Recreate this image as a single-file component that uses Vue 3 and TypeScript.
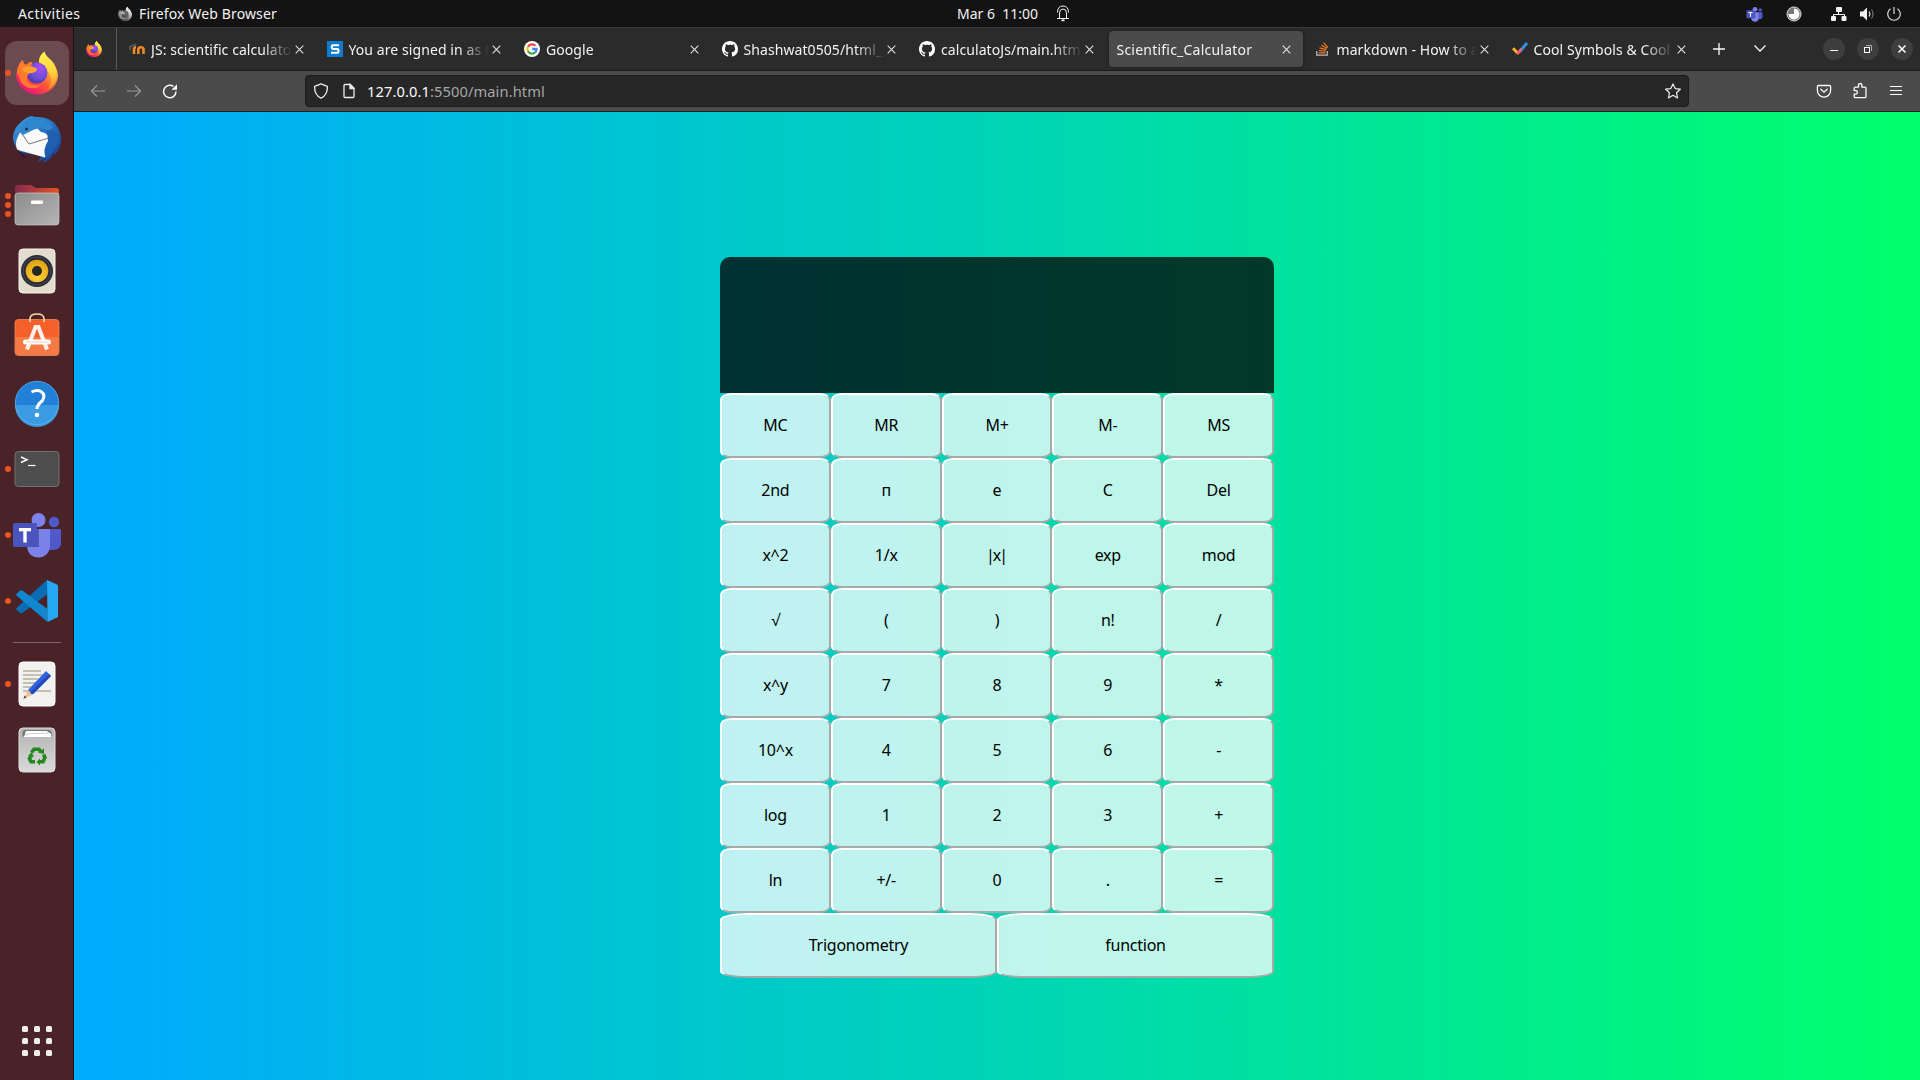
<script setup lang="ts">
interface Tab {
  title: string
  icon: string
  active?: boolean
}

interface DockItem {
  name: string
  dots: number
  active?: boolean
}

const tabs: Tab[] = [
  { title: 'JS: scientific calculator', icon: 'moodle' },
  { title: 'You are signed in as to', icon: 's' },
  { title: 'Google', icon: 'google' },
  { title: 'Shashwat0505/html_p', icon: 'github' },
  { title: 'calculatoJs/main.html', icon: 'github' },
  { title: 'Scientific_Calculator', icon: '', active: true },
  { title: 'markdown - How to ad', icon: 'stack' },
  { title: 'Cool Symbols & Cool F', icon: 'check' },
]

const apps: DockItem[] = [
  { name: 'firefox', dots: 1, active: true },
  { name: 'thunderbird', dots: 0 },
  { name: 'files', dots: 3 },
  { name: 'rhythmbox', dots: 0 },
  { name: 'software', dots: 0 },
  { name: 'help', dots: 0 },
  { name: 'terminal', dots: 1 },
  { name: 'teams', dots: 1 },
  { name: 'vscode', dots: 1 },
  { name: 'separator', dots: 0 },
  { name: 'editor', dots: 1 },
  { name: 'trash', dots: 0 },
]

const keys: string[][] = [
  ['MC', 'MR', 'M+', 'M-', 'MS'],
  ['2nd', 'п', 'e', 'C', 'Del'],
  ['x^2', '1/x', '|x|', 'exp', 'mod'],
  ['√', '(', ')', 'n!', '/'],
  ['x^y', '7', '8', '9', '*'],
  ['10^x', '4', '5', '6', '-'],
  ['log', '1', '2', '3', '+'],
  ['ln', '+/-', '0', '.', '='],
  ['Trigonometry', 'function'],
]
</script>

<template>
  <div class="desktop">
    <svg class="defs" width="0" height="0">
      <defs>
        <linearGradient id="ffBody" x1="0.85" y1="0.1" x2="0.25" y2="0.95">
          <stop offset="0" stop-color="#fff44f" />
          <stop offset="0.35" stop-color="#ffa436" />
          <stop offset="0.62" stop-color="#ff5634" />
          <stop offset="1" stop-color="#e8117f" />
        </linearGradient>
        <linearGradient id="ffFlame" x1="0.5" y1="0" x2="0.5" y2="1">
          <stop offset="0" stop-color="#fff350" />
          <stop offset="0.5" stop-color="#ffd53e" />
          <stop offset="1" stop-color="#ff8a2c" />
        </linearGradient>
        <radialGradient id="ffGlobe" cx="0.65" cy="0.25" r="0.8">
          <stop offset="0" stop-color="#a84bf5" />
          <stop offset="0.6" stop-color="#6e4fd8" />
          <stop offset="1" stop-color="#4f37a8" />
        </radialGradient>
        <linearGradient id="tbBlue" x1="0" y1="0" x2="0.8" y2="1">
          <stop offset="0" stop-color="#3fa3e0" />
          <stop offset="0.5" stop-color="#2570c0" />
          <stop offset="1" stop-color="#1b3f96" />
        </linearGradient>
        <linearGradient id="filesBack" x1="0" x2="1">
          <stop offset="0" stop-color="#82294f" />
          <stop offset="1" stop-color="#e9541f" />
        </linearGradient>
        <linearGradient id="filesFront" x1="0" y1="0" x2="1" y2="1">
          <stop offset="0" stop-color="#8c8c8c" />
          <stop offset="1" stop-color="#b5b5b5" />
        </linearGradient>
        <radialGradient id="speaker" cx="0.5" cy="0.75" r="0.75">
          <stop offset="0" stop-color="#ffd33c" />
          <stop offset="1" stop-color="#dca00d" />
        </radialGradient>
        <linearGradient id="trashBody" x1="0" y1="0" x2="0" y2="1">
          <stop offset="0" stop-color="#b3b3b3" />
          <stop offset="1" stop-color="#dadada" />
        </linearGradient>
        <symbol id="firefox" viewBox="0 0 48 48">
          <path d="M4 22C5 15 8 12 10 11C10 14 11 15 13 16C15 14 17 13 19 13L19 17L27 14C26 8 29 5 31.500 2.500C32 8 39 10 42 17C44.500 21 45 25 45 27C44 38 35 45.500 24 45.500S3 36 3 25Z" fill="url(#ffBody)" />
          <path d="M31.500 2.500C32 8 39 10 42 17C46 28 42 37 34 41C40 34 39 27 35 23C33 18 25 18 26 11C27 6 29 5 31.500 2.500Z" fill="url(#ffFlame)" />
          <circle cx="24" cy="24" r="10.500" fill="url(#ffGlobe)" />
          <path d="M4 23C5 17 8 13 10 11C10 14 11 15 13 16C15 14 17 13 19 13L18 17L24 20C24 22 22 23 19 24C16 24 14 26 14 29C14 35 22 38 28 35C25 41 13 41 8 33Z" fill="#ff7a2c" />
          <path d="M10 19C14 17 20 17 24 20C24 22 22 23 19 24L14 24C11 23 9 22 10 19Z" fill="#ffa22c" />
        </symbol>
        <symbol id="teams" viewBox="0 0 48 48">
          <circle cx="41" cy="12" r="5.200" fill="#5059c9" />
          <path d="M36 19H48V33Q48 39 41 40H36Z" fill="#5059c9" />
          <circle cx="25.500" cy="10" r="7" fill="#7b83eb" />
          <path d="M15 19H37V36Q36 47 25.500 47.500Q15 47 14 37Z" fill="#7b83eb" />
          <path d="M14 19H26V37H14Z" fill="#424a9e" opacity=".75" />
          <rect x="0" y="13" width="24" height="24" rx="1.500" fill="#4b53bc" />
          <path d="M6 18H18V21.200H13.700V32.500H10.300V21.200H6Z" fill="#fff" />
        </symbol>
      </defs>
    </svg>

    <header class="topbar">
      <span class="activities">Activities</span>
      <svg class="app-icon" width="16" height="16"><use href="#firefox" /></svg>
      <span class="app-name">Firefox Web Browser</span>
      <span class="clock">Mar 6&nbsp; 11:00</span>
      <svg class="bell" width="14" height="17" viewBox="0 0 14 17" fill="none" stroke="#eee">
        <path d="M1 13.500H13M3.500 13V8Q3.500 4 7 4T10.500 8V13M1.500 7.500Q1.500 1 7 1T12.500 7.500" />
        <path d="M5.500 15.300H8.500" stroke-width="1.800" />
      </svg>
      <div class="status">
        <svg class="st-teams" width="17" height="16"><use href="#teams" /></svg>
        <svg class="st-clock" width="16" height="16" viewBox="0 0 16 16">
          <circle cx="8" cy="8" r="7" fill="#777" stroke="#ddd" />
          <path d="M8 8V2.500A5.500 5.500 0 1 1 2.500 8Z" fill="#fff" />
        </svg>
        <svg class="st-net" width="16" height="16" viewBox="0 0 16 16" fill="#f2f2f2">
          <rect x="5" y="1" width="6" height="5" rx="1" />
          <rect x="0" y="10" width="5" height="5" rx="1" />
          <rect x="10.500" y="10" width="5" height="5" rx="1" />
          <path d="M7.500 6V8.500M2.500 10V8.500H13.500V10" fill="none" stroke="#f2f2f2" />
        </svg>
        <svg class="st-vol" width="16" height="16" viewBox="0 0 16 16" fill="none">
          <path d="M1 5.500H4L8 1.500V14.500L4 10.500H1Z" fill="#f2f2f2" />
          <path d="M10 5.500Q11.800 8 10 10.500" stroke="#ddd" stroke-width="1.200" />
          <path d="M12.500 3.500Q15.600 8 12.500 12.500" stroke="#888" />
        </svg>
        <svg class="st-power" width="16" height="16" viewBox="0 0 16 16" fill="none" stroke="#ddd" stroke-width="1.200">
          <path d="M4.500 2.700A6.300 6.300 0 1 0 11.500 2.700M8 1V8" />
        </svg>
      </div>
    </header>

    <div class="workspace">
      <aside class="dock">
        <template v-for="app in apps" :key="app.name">
          <div v-if="app.name === 'separator'" class="dock-sep"></div>
          <div v-else class="dock-item" :class="{ active: app.active }">
            <div class="dots"><i v-for="n in app.dots" :key="n"></i></div>
            <svg v-if="app.name === 'firefox'" width="48" height="48"><use href="#firefox" /></svg>
            <svg v-else-if="app.name === 'thunderbird'" width="48" height="48" viewBox="0 -1 48 48">
              <path d="M7 7Q13 1 19 0L22 1Q36 0 43 9Q49 17 48 27Q46 34 42 39L41 36Q39 44 29 47L33 42L25 46L28 40L7 36Q0 29 0 21Q1 12 7 7Z" fill="url(#tbBlue)" />
              <path d="M5 34L14 42Q8 41 5 34Z" fill="#2a1250" />
              <path d="M9 14Q4 20 3 27Q3 33 5 34L32 41.500L37 22Q33 16 28 16L23 11Q16 14 9 14Z" fill="#fafafa" />
              <path d="M7 15L16 28L36 22" fill="none" stroke="#777" />
              <path d="M7 16Q9 5 19 1Q33 1 40 11L36 15Q28 10 20 14Q16 16 10 19Z" fill="#2d86ce" />
              <path d="M34 14Q44 14 46 23Q42 36 33 42Q29 34 35 25Z" fill="#205eae" />
              <circle cx="13.500" cy="13" r="1.500" fill="#26333f" />
            </svg>
            <svg v-else-if="app.name === 'files'" width="48" height="48" viewBox="0 0 48 48">
              <path d="M2 42V7Q2 4 5 4H18L23 7H43Q46 7 46 10V40Z" fill="url(#filesBack)" />
              <rect x="2" y="12" width="44" height="32" rx="3" fill="url(#filesFront)" stroke="#c9c9c9" stroke-width=".7" />
              <rect x="18" y="19.500" width="12" height="3.500" rx="1" fill="#fff" />
            </svg>
            <svg v-else-if="app.name === 'rhythmbox'" width="48" height="48" viewBox="0 0 48 48">
              <rect x="6" y="2" width="36" height="44" rx="4" fill="#e3ddd0" stroke="#f5f2ea" />
              <circle cx="24" cy="24" r="16" fill="#2a2b36" />
              <circle cx="24" cy="24" r="14" fill="none" stroke="#484a5c" />
              <circle cx="24" cy="24" r="11.300" fill="url(#speaker)" />
              <circle cx="24" cy="24" r="5" fill="#262626" />
            </svg>
            <svg v-else-if="app.name === 'software'" width="48" height="48" viewBox="0 0 48 48">
              <rect x="2" y="6.500" width="44" height="36" rx="3.500" fill="#f4602a" stroke="#ef8b61" stroke-width=".8" />
              <path d="M2.500 24H45.500V39Q45.500 42 42.500 42H5.500Q2.500 42 2.500 39Z" fill="#f67a45" />
              <path d="M17 9V6Q17 1 24 1T31 6V9" fill="none" stroke="#f4d9a5" stroke-width="1.600" />
              <path d="M14 36.500L22.500 14H25.500L34 36.500" fill="none" stroke="#fff1e9" stroke-width="4" />
              <rect x="10" y="26.500" width="28" height="5" rx="2.500" fill="#fff" />
              <path d="M13 29H35" stroke="#f5cdb9" />
            </svg>
            <svg v-else-if="app.name === 'help'" width="48" height="48" viewBox="0 0 48 48">
              <circle cx="24" cy="24" r="22" fill="#2180d8" />
              <path d="M2 26H46A22 22 0 0 1 2 26Z" fill="#3b9be2" />
              <circle cx="24" cy="24" r="21.700" fill="none" stroke="#62b2ec" stroke-width=".7" />
              <path d="M18.500 13Q24 10.500 28 12.500Q33 16 29.500 21.500Q24 26 24 30" fill="none" stroke="#fff" stroke-width="3" />
              <circle cx="24" cy="36" r="2.300" fill="#fff" />
            </svg>
            <svg v-else-if="app.name === 'terminal'" width="48" height="48" viewBox="0 0 48 48">
              <rect x="2" y="6.500" width="44" height="35" rx="3.500" fill="#4d4d4d" stroke="#727272" />
              <path d="M8 12L14 14.800L8 17.500" fill="none" stroke="#fff" stroke-width="1.500" />
              <path d="M15 20.500H22.500" stroke="#fff" stroke-width="1.200" />
            </svg>
            <svg v-else-if="app.name === 'teams'" width="48" height="48" viewBox="0 0 48 48"><use href="#teams" y="-1" /></svg>
            <svg v-else-if="app.name === 'vscode'" width="48" height="48" viewBox="0 0 48 48">
              <path d="M3.500 31L30 6.500L34.500 3V17L10 35.500Q8 37 6.500 35.500L3.500 32.500Q2.500 31.700 3.500 31Z" fill="#0a6cb4" />
              <path d="M3.500 17L6.500 14Q8 12.500 10 14L34.500 32V45L31 42L3.500 18.500Q2.500 17.500 3.500 17Z" fill="#1187d0" />
              <path d="M34 3L44 7.500Q45 8 45 9V39Q45 40 44 40.500L34.500 45Z" fill="#25a7f1" />
            </svg>
            <svg v-else-if="app.name === 'editor'" width="48" height="48" viewBox="0 0 48 48">
              <rect x="6" y="2" width="36" height="44" rx="4" fill="#f1f1f0" stroke="#fff" />
              <path d="M10 11H28M10 15H31M10 19H25M10 23H24M10 27H18M10 31H38" stroke="#c5bfb2" stroke-width="2" />
              <path d="M15 30L19 35L11 38.500Z" fill="#f4bd8a" />
              <path d="M11.500 35.500L13.500 37.500L10.500 38.700Z" fill="#444" />
              <path d="M15 30L33 11L38 16L20 34.500Z" fill="#2f62e0" />
              <path d="M19 34.500L38 16L36 14L17 32.500Z" fill="#2448b4" />
            </svg>
            <svg v-else-if="app.name === 'trash'" width="48" height="48" viewBox="0 0 48 48">
              <rect x="6" y="2" width="36" height="44" rx="4" fill="url(#trashBody)" stroke="#dedede" />
              <path d="M9.500 10.500V7Q9.500 4 13 4H35Q38.500 4 38.500 7V10.500Z" fill="#757575" />
              <path d="M11 11L13 5H34L38 8V11Z" fill="#fff" />
              <path d="M13 10V8L36 7" fill="none" stroke="#bbb" stroke-width=".7" />
              <g fill="none" stroke="#23891f" stroke-width="3.600">
                <path d="M18.500 26.500L21 23.200H26L28 26" />
                <path d="M30.500 28.500L32 31.500L30 35.800H26" />
                <path d="M22 35.800H18L16.500 32.500L18 30" />
              </g>
              <path d="M25 26.500L31 28L31 22.500ZM27 32.500L23.500 36L27 39.500ZM15 30L18.500 26L21 31Z" fill="#23891f" />
            </svg>
          </div>
        </template>
        <div class="apps-grid"><i v-for="n in 9" :key="n"></i></div>
      </aside>

      <main class="window">
        <div class="tabbar">
          <div class="pinned"><svg width="18" height="18"><use href="#firefox" /></svg></div>
          <div class="tabs">
            <div v-for="tab in tabs" :key="tab.title" class="tab" :class="{ selected: tab.active }">
              <div class="tab-inner">
                <svg v-if="tab.icon === 'moodle'" class="fav" width="16" height="16" viewBox="0 0 16 16" fill="none">
                  <path d="M5 13V8.500Q5 6.300 7 6.300M9.300 13V8.500Q9.300 6.300 11.800 6.300Q14.500 6.300 14.500 8.500V13" stroke="#f08a24" stroke-width="2.600" />
                  <path d="M0 5L6 2.500L8 4L3 6Z" fill="#555" />
                  <path d="M1 5V9" stroke="#777" />
                </svg>
                <svg v-else-if="tab.icon === 's'" class="fav" width="16" height="16" viewBox="0 0 16 16">
                  <rect width="16" height="16" fill="#0f7bcf" />
                  <path d="M12 4.300H6Q4.700 4.300 4.700 6T6 7.900H10.300Q11.500 7.900 11.500 9.800T10.300 11.700H4" fill="none" stroke="#fff" stroke-width="2" />
                </svg>
                <svg v-else-if="tab.icon === 'google'" class="fav" width="16" height="16" viewBox="0 0 16 16" fill="none">
                  <circle cx="8" cy="8" r="8" fill="#fff" />
                  <g stroke-width="2.300">
                    <path d="M11.400 4.800A4.600 4.600 0 0 0 4 5.800" stroke="#ea4335" />
                    <path d="M4 5.800A4.600 4.600 0 0 0 4 10.300" stroke="#fbbc05" />
                    <path d="M4 10.300A4.600 4.600 0 0 0 11.200 11.300" stroke="#34a853" />
                    <path d="M11.200 11.300A4.600 4.600 0 0 0 12.600 8H8.200" stroke="#4285f4" />
                  </g>
                </svg>
                <svg v-else-if="tab.icon === 'github'" class="fav" width="16" height="16" viewBox="0 0 16 16" fill="#fff">
                  <path d="M8 0C3.580 0 0 3.580 0 8c0 3.540 2.290 6.530 5.470 7.590.4.070.55-.17.55-.38 0-.19-.01-.82-.01-1.490-2.010.37-2.530-.49-2.690-.94-.09-.23-.48-.94-.82-1.130-.28-.15-.68-.52-.01-.53.63-.01 1.080.58 1.230.82.72 1.210 1.870.87 2.330.66.07-.52.28-.87.51-1.070-1.780-.2-3.640-.89-3.640-3.950 0-.87.31-1.590.82-2.150-.08-.2-.36-1.020.08-2.120 0 0 .67-.21 2.200.82.64-.18 1.320-.27 2-.27s1.360.09 2 .27c1.530-1.040 2.200-.82 2.200-.82.44 1.100.16 1.920.08 2.120.51.56.82 1.270.82 2.150 0 3.070-1.870 3.750-3.650 3.950.29.25.54.73.54 1.480 0 1.070-.01 1.930-.01 2.200 0 .21.15.46.55.38A8 8 0 0 0 16 8c0-4.420-3.580-8-8-8Z" />
                </svg>
                <svg v-else-if="tab.icon === 'stack'" class="fav stack" width="16" height="16" viewBox="0 0 16 16" fill="none" stroke="#ee7b25" stroke-width="1.200">
                  <path d="M.7 10V14.200H11.300V10" stroke="#bbb" stroke-width="1.200" />
                  <path d="M2.500 11.900H9.500M2.700 9.500L9.700 10.200M3.500 6.900L10.200 8.700M5.200 4.100L11 7.400M7.600 1.700L11.800 6.500" />
                </svg>
                <svg v-else-if="tab.icon === 'check'" class="fav" width="16" height="16" viewBox="0 0 16 16" fill="none" stroke-width="2.800">
                  <path d="M7.500 11L15 2" stroke="#2e93ee" />
                  <path d="M1 7.300L6 12.500" stroke="#ffb52d" />
                  <path d="M5 13L9.500 8" stroke="#fa5d64" />
                </svg>
                <span class="title">{{ tab.title }}</span>
                <svg class="close" width="9" height="9" viewBox="0 0 9 9" stroke="#e2e2e2" stroke-width="1.100">
                  <path d="M.7.7L8.300 8.300M8.300.7L.7 8.300" />
                </svg>
              </div>
            </div>
          </div>
          <svg class="plus" width="12" height="12" viewBox="0 0 12 12" stroke="#fbfbfe" stroke-width="1.300"><path d="M6 0V12M0 6H12" /></svg>
          <svg class="chev" width="14" height="10" viewBox="0 0 14 10" fill="none" stroke="#fbfbfe" stroke-width="1.300"><path d="M1.500 1.500L7 7L12.500 1.500" /></svg>
          <div class="controls">
            <span><svg width="10" height="10" stroke="#fff"><path d="M1 6.500H9" /></svg></span>
            <span><svg width="10" height="10" fill="none" stroke="#fff"><rect x="1.500" y="3.500" width="5" height="5" /><path d="M3 1.500H8.500V7" stroke="#aaa" /></svg></span>
            <span><svg width="10" height="10" stroke="#fff" stroke-width="1.500"><path d="M1.500 1.500L8.500 8.500M8.500 1.500L1.500 8.500" /></svg></span>
          </div>
        </div>

        <div class="toolbar">
          <div class="nav">
            <svg width="16" height="16" viewBox="0 0 16 16" fill="none" stroke="#999" stroke-width="1.200"><path d="M15 8H1.500M7 2.500L1.500 8L7 13.500" /></svg>
            <svg width="16" height="16" viewBox="0 0 16 16" fill="none" stroke="#999" stroke-width="1.200"><path d="M1 8H14.500M9 2.500L14.500 8L9 13.500" /></svg>
            <svg width="16" height="16" viewBox="0 0 16 16" fill="none" stroke="#fbfbfe" stroke-width="1.500"><path d="M14 8.500A6.200 6.200 0 1 1 11.500 3.500" /><path d="M15 1.200V6.700H9.500Z" fill="#fbfbfe" stroke="none" /></svg>
          </div>
          <div class="urlbar">
            <svg class="shield" width="16" height="16" viewBox="0 0 16 16" fill="none" stroke="#ececf0" stroke-width="1.300"><path d="M8 .8L14.300 3.300Q15 11.500 8 15.300Q1 11.500 1.700 3.300Z" stroke-linejoin="round" /></svg>
            <svg class="page" width="12" height="16" viewBox="0 0 12 16" fill="none" stroke="#ececf0" stroke-width="1.300"><path d="M1 2.500Q1 1.500 2 1.500H7.300L11 5.200V13.500Q11 14.500 10 14.500H2Q1 14.500 1 13.500Z" /><path d="M7 1.500V5.500H11Z" fill="#ececf0" /></svg>
            <span class="url"><b>127.0.0.1</b>:5500/main.html</span>
            <svg class="star" width="16" height="16" viewBox="0 0 16 16" fill="none" stroke="#ececf0" stroke-width="1.200" stroke-linejoin="round"><path d="M8 .9L10.200 5.600L15.300 6.200L11.500 9.700L12.500 14.900L8 12.300L3.500 14.900L4.500 9.700L.7 6.200L5.800 5.600Z" /></svg>
          </div>
          <div class="tools">
            <svg width="16" height="16" viewBox="0 0 16 16" fill="none" stroke="#fbfbfe" stroke-width="1.300"><path d="M2.500 2.500H13.500Q14.600 2.500 14.600 3.600V7.500A6.600 6.600 0 0 1 1.400 7.500V3.600Q1.400 2.500 2.500 2.500ZM4.800 6.200L8 9.200L11.200 6.200" stroke-linecap="round" /></svg>
            <svg width="16" height="16" viewBox="-.5 .3 16 16" fill="none" stroke="#fbfbfe" stroke-width="1.300"><path d="M1.700 7V5.500Q1.700 4.500 2.700 4.500H6V2.500A1.700 1.700 0 0 1 9.400 2.500V4.500H12.500Q13.500 4.500 13.500 5.500V14Q13.500 15 12.500 15H2.700Q1.700 15 1.700 14V11.500H3.500A1.800 1.800 0 0 0 3.500 8H1.700Z" stroke-linejoin="round" /></svg>
            <svg width="16" height="16" viewBox="0 0 16 16" stroke="#fbfbfe" stroke-width="1.200"><path d="M2 3.500H14M2 7.500H14M2 11.500H14" /></svg>
          </div>
        </div>

        <section class="content">
          <div class="calculator">
            <div class="display"></div>
            <div v-for="(row, r) in keys" :key="r" class="row">
              <button v-for="key in row" :key="key" type="button" :class="{ tight: key === '|x|' }">{{ key }}</button>
            </div>
          </div>
        </section>
      </main>
    </div>
  </div>
</template>

<style>
body {
  margin: 0;
  overflow: hidden;
}
</style>

<style scoped>
.desktop {
  width: 1920px;
  height: 1080px;
  display: flex;
  flex-direction: column;
  overflow: hidden;
  font-family: "Noto Sans", "Open Sans", sans-serif;
  font-size: 14px;
  color: #f2f2f2;
}
svg {
  display: block;
  flex: none;
}
.defs {
  position: absolute;
}
.topbar {
  height: 27px;
  flex: none;
  display: flex;
  align-items: center;
  background: #131313;
  white-space: nowrap;
  line-height: 27px;
}
.activities {
  width: 62px;
  margin-left: 18px;
  letter-spacing: 0.4px;
}
.app-icon {
  margin-left: 37px;
  filter: grayscale(1);
}
.app-name {
  width: 140px;
  margin-left: 6px;
  letter-spacing: 0.13px;
}
.clock {
  width: 82px;
  margin-left: 678px;
}
.bell {
  margin-left: 17px;
}
.status {
  display: flex;
  margin-left: auto;
  padding-right: 18px;
}
.st-clock {
  margin-left: 23px;
}
.st-net {
  margin-left: 29px;
}
.st-vol {
  margin-left: 12px;
}
.st-power {
  margin-left: 11px;
}
.workspace {
  flex: 1;
  display: flex;
  min-height: 0;
}
.dock {
  box-sizing: border-box;
  width: 74px;
  flex: none;
  display: flex;
  flex-direction: column;
  align-items: center;
  gap: 2px;
  padding: 14px 0 24px;
  background: #4a2329;
  border-right: 1px solid #1d1012;
}
.dock-item {
  position: relative;
  width: 64px;
  height: 64px;
  flex: none;
  display: flex;
  align-items: center;
  justify-content: center;
  border-radius: 12px;
}
.dock-item.active {
  background: #6c4b50;
}
.dots {
  position: absolute;
  left: 0;
  top: 0;
  height: 64px;
  display: flex;
  flex-direction: column;
  justify-content: center;
  gap: 3px;
}
.dots i {
  width: 6px;
  height: 6px;
  border-radius: 50%;
  background: #e95420;
}
.dock-sep {
  width: 48px;
  height: 1px;
  flex: none;
  margin: 7px 0;
  background: #80656a;
}
.apps-grid {
  display: grid;
  grid-template-columns: repeat(3, 6px);
  gap: 6px;
  margin-top: auto;
}
.apps-grid i {
  height: 6px;
  border-radius: 1.5px;
  background: #eeeeec;
}
.window {
  flex: 1;
  min-width: 0;
  display: flex;
  flex-direction: column;
}
.tabbar {
  box-sizing: border-box;
  height: 44px;
  flex: none;
  display: flex;
  align-items: center;
  background: #2b2b2b;
  border-top: 1px solid #3b3b3b;
  border-bottom: 1px solid #1a1a1a;
}
.pinned {
  box-sizing: border-box;
  width: 43px;
  height: 42px;
  flex: none;
  display: flex;
  align-items: center;
  padding-left: 11px;
  border-right: 1px solid #5b5b5b;
}
.tabs {
  display: flex;
  flex: none;
  margin-left: 2.5px;
}
.tab {
  box-sizing: border-box;
  width: 197.5px;
  padding: 0 2px;
}
.tab-inner {
  box-sizing: border-box;
  height: 36px;
  display: flex;
  align-items: center;
  padding: 0 11.5px 0 7.5px;
  border-radius: 4px;
}
.selected .tab-inner {
  background: #4b4b4b;
  box-shadow: 0 0 3px rgba(0, 0, 0, 0.4);
}
.fav {
  margin-right: 6px;
}
.stack {
  margin-left: 1.5px;
  margin-right: 5px;
}
.title {
  flex: 1;
  min-width: 0;
  overflow: hidden;
  white-space: nowrap;
  line-height: 24px;
  padding-top: 1px;
  margin-right: 3px;
  letter-spacing: 0.08px;
  mask-image: linear-gradient(to left, transparent, #000 29px);
}
.selected .title {
  letter-spacing: 0.22px;
}
.plus {
  margin-left: 13.5px;
}
.chev {
  margin-left: 27.5px;
}
.controls {
  display: flex;
  gap: 12px;
  margin-left: auto;
  padding-right: 7px;
}
.controls span {
  width: 22px;
  height: 22px;
  display: flex;
  align-items: center;
  justify-content: center;
  border-radius: 50%;
  background: #3e3e3e;
}
.toolbar {
  box-sizing: border-box;
  height: 41px;
  flex: none;
  display: flex;
  align-items: center;
  background: #4b4b4b;
  border-bottom: 1px solid #1f1f1f;
}
.nav {
  display: flex;
  gap: 20px;
  margin-left: 16px;
}
.urlbar {
  box-sizing: border-box;
  width: 1384px;
  height: 32px;
  flex: none;
  display: flex;
  align-items: center;
  margin-left: 127px;
  padding: 0 7px;
  background: #272727;
  border: 1px solid #1a1a1a;
  border-radius: 4px;
}
.page {
  margin-left: 14px;
}
.url {
  margin-left: 12px;
  font-size: 14.67px;
  letter-spacing: 0.1px;
  color: #a6a6a6;
  white-space: nowrap;
}
.url b {
  font-weight: 400;
  color: #fbfbfe;
}
.star {
  margin-left: auto;
}
.tools {
  display: flex;
  gap: 20px;
  margin-left: auto;
  padding-right: 16px;
}
.content {
  flex: 1;
  display: flex;
  align-items: center;
  justify-content: center;
  padding-top: 43px;
  background: linear-gradient(to right, #00aaff, #00ff6c);
  box-sizing: border-box;
}
.calculator {
  width: 554px;
}
.display {
  height: 136px;
  border-radius: 10px 10px 0 0;
  background: rgba(0, 0, 0, 0.75);
}
.row {
  display: flex;
  height: 65px;
}
button {
  flex: 1 1 0;
  min-width: 0;
  box-sizing: border-box;
  margin: 0;
  padding: 0 0 2px;
  border: 2px solid;
  border-color: #fff #a9a9a9 #a9a9a9 #fff;
  border-radius: 10%;
  background: rgba(255, 255, 255, 0.75);
  color: #000;
  font: 16px "Noto Sans", "Open Sans", sans-serif;
  letter-spacing: -0.25px;
}
button.tight {
  letter-spacing: -2px;
  text-indent: -2px;
}
</style>
